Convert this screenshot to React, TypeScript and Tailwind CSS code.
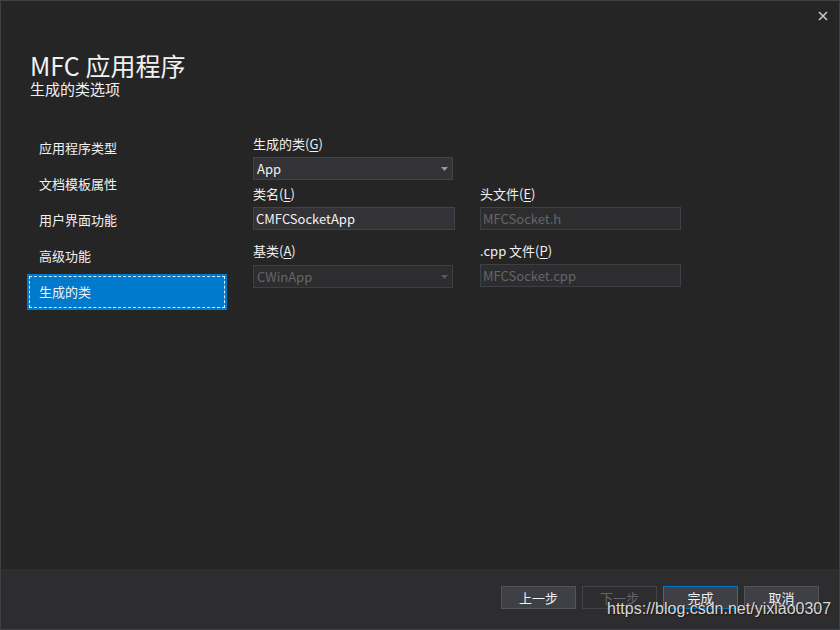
import React from "react";

const font = { fontFamily: '"Noto Sans CJK SC", "Open Sans", sans-serif' };

function Arrow({ dim }: { dim?: boolean }) {
  return (
    <svg width="7" height="4" viewBox="0 0 7 4" className="shrink-0">
      <path d="M0 0 L7 0 L3.5 4 Z" fill={dim ? "#5a5a5e" : "#999999"} />
    </svg>
  );
}

function Label({ main, key1 }: { main: string; key1: string }) {
  return (
    <div className="h-[20px] leading-[20px] text-[13px] text-[#f1f1f1] whitespace-nowrap">
      {main}(<span className="underline underline-offset-2">{key1}</span>)
    </div>
  );
}

function Combo({ value, disabled, width }: { value: string; disabled?: boolean; width: string }) {
  return (
    <div
      className={`${width} h-[23px] flex items-center justify-between pl-[3px] pr-[4px] border ${
        disabled ? "bg-[#2d2d30] border-[#3f3f46] text-[#656565]" : "bg-[#333337] border-[#434346] text-[#f1f1f1]"
      } text-[13px]`}
    >
      <span className="leading-[20px]">{value}</span>
      <Arrow dim={disabled} />
    </div>
  );
}

function TextBox({ value, disabled, width }: { value: string; disabled?: boolean; width: string }) {
  return (
    <div
      className={`${width} h-[23px] flex items-center pl-[2px] border ${
        disabled ? "bg-[#2d2d30] border-[#3f3f46] text-[#656565]" : "bg-[#333337] border-[#434346] text-[#f1f1f1]"
      } text-[13px]`}
    >
      <span className="leading-[20px]">{value}</span>
    </div>
  );
}

function Btn({ text, kind }: { text: string; kind?: "disabled" | "default" }) {
  const cls =
    kind === "disabled"
      ? "bg-[#2d2d30] border-[#434346] text-[#656565]"
      : kind === "default"
      ? "bg-[#3f3f46] border-[#007acc] text-[#f1f1f1]"
      : "bg-[#3f3f46] border-[#555555] text-[#f1f1f1]";
  return (
    <div className={`w-[75px] h-[23px] border flex items-center justify-center text-[13px] ${cls}`}>
      {text}
    </div>
  );
}

export default function App() {
  const nav = ["应用程序类型", "文档模板属性", "用户界面功能", "高级功能", "生成的类"];
  return (
    <div
      className="relative w-[840px] h-[630px] bg-[#252526] border border-[#3f3f46] flex flex-col overflow-hidden"
      style={font}
    >
      {/* close */}
      <svg className="absolute left-[817px] top-[10px]" width="10" height="10" viewBox="0 0 10 10">
        <path d="M1 1 L9 9 M9 1 L1 9" stroke="#c8c8c8" strokeWidth="1.6" />
      </svg>

      <div className="flex-1 flex flex-col">
        <div className="pl-[29px] pt-[48px]">
          <div className="text-[25px] leading-[32px] text-[#f1f1f1]">MFC 应用程序</div>
          <div className="text-[15px] leading-[18px] text-[#f1f1f1] -mt-[1px]">生成的类选项</div>
        </div>

        <div className="flex mt-[32px]">
          <div className="ml-[26px] w-[200px] flex flex-col">
            {nav.map((n, i) => {
              const sel = i === nav.length - 1;
              return (
                <div
                  key={n}
                  className={`h-[36px] flex items-center text-[13px] text-[#f1f1f1] ${
                    sel ? "bg-[#007acc] p-[2px]" : "pl-[12px]"
                  }`}
                >
                  {sel ? (
                    <div className="w-full h-full border border-dashed border-[#dcefff] flex items-center pl-[9px]">
                      {n}
                    </div>
                  ) : (
                    n
                  )}
                </div>
              );
            })}
          </div>

          <div className="ml-[26px] pt-[4px] flex">
            <div className="w-[227px] flex flex-col">
              <Label main="生成的类" key1="G" />
              <div className="mt-[3px]">
                <Combo value="App" width="w-[200px]" />
              </div>
              <div className="mt-[4px]">
                <Label main="类名" key1="L" />
              </div>
              <div className="mt-[3px]">
                <TextBox value="CMFCSocketApp" width="w-[202px]" />
              </div>
              <div className="mt-[11px]">
                <Label main="基类" key1="A" />
              </div>
              <div className="mt-[4px]">
                <Combo value="CWinApp" disabled width="w-[200px]" />
              </div>
            </div>
            <div className="w-[201px] flex flex-col pt-[50px]">
              <Label main="头文件" key1="E" />
              <div className="mt-[3px]">
                <TextBox value="MFCSocket.h" disabled width="w-[201px]" />
              </div>
              <div className="mt-[11px]">
                <Label main=".cpp 文件" key1="P" />
              </div>
              <div className="mt-[3px]">
                <TextBox value="MFCSocket.cpp" disabled width="w-[201px]" />
              </div>
            </div>
          </div>
        </div>
      </div>

      <div className="h-[60px] bg-[#2d2d30] flex justify-end items-start pt-[17px] pr-[20px] gap-[6px]">
        <Btn text="上一步" />
        <Btn text="下一步" kind="disabled" />
        <Btn text="完成" kind="default" />
        <Btn text="取消" />
      </div>

      <div
        className="absolute left-[606px] top-[599px] text-[16px] leading-[18px] text-[#d8d8d8] whitespace-nowrap"
        style={{ fontFamily: '"Liberation Sans", Arial, sans-serif', textShadow: "1px 1px 1px #1a1a1a" }}
      >
        https://blog.csdn.net/yixiao0307
      </div>
    </div>
  );
}
